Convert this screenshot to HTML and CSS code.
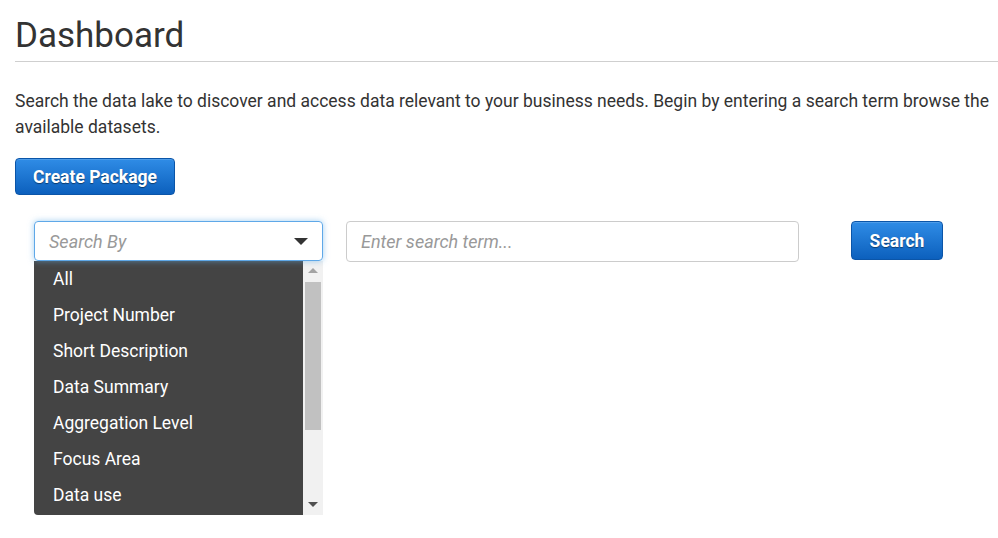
FILE: index.html
```html
<!DOCTYPE html>
<html>
<head>
<meta charset="utf-8">
<link rel="stylesheet" href="styles.css">
</head>
<body>
<div class="page">
  <header class="page-header">
    <h1>Dashboard</h1>
  </header>
  <p class="intro">Search the data lake to discover and access data relevant to your business needs. Begin by entering a search term browse the available datasets.</p>
  <button class="btn btn-primary btn-create">Create Package</button>
  <div class="search-row">
    <div class="select-wrap">
      <div class="select">
        <span class="placeholder">Search By</span>
        <span class="caret"></span>
      </div>
      <div class="dropdown">
        <ul class="options">
          <li>All</li>
          <li>Project Number</li>
          <li>Short Description</li>
          <li>Data Summary</li>
          <li>Aggregation Level</li>
          <li>Focus Area</li>
          <li>Data use</li>
        </ul>
        <div class="scrollbar">
          <span class="arrow-up"></span>
          <span class="thumb"></span>
          <span class="arrow-down"></span>
        </div>
      </div>
    </div>
    <div class="input"><span class="placeholder">Enter search term...</span></div>
    <button class="btn btn-primary btn-search">Search</button>
  </div>
</div>
</body>
</html>
```
FILE: styles.css
```css
* { box-sizing: border-box; }
html, body { margin: 0; padding: 0; background: #fff; }
body { font-family: Roboto, "Liberation Sans", sans-serif; color: #333; }
.page { padding: 0 0 0 15px; }
.page-header { padding: 16px 0 5px; border-bottom: 1px solid #cfcfcf; }
.page-header h1 { margin: 0; font-size: 35px; font-weight: 400; line-height: 40px; color: #333; }
.intro { margin: 26px 8px 0 0; font-size: 17.5px; line-height: 26px; color: #333; }
.btn {
  font-family: Roboto, "Liberation Sans", sans-serif;
  font-weight: 700; color: #fff; cursor: pointer;
  border-radius: 4px; border: 1px solid #0b55a8;
  text-shadow: 0 1px 1px rgba(0,0,0,0.45);
  background: linear-gradient(#2f8ce6, #0c60bd);
  box-shadow: inset 0 1px 0 rgba(255,255,255,0.15);
}
.btn-create { margin-top: 18px; width: 160px; height: 37px; font-size: 17.5px; padding: 0; display: block; }
.search-row { display: flex; align-items: flex-start; margin-top: 26px; padding-left: 19px; }
.select-wrap { width: 289px; display: flex; flex-direction: column; }
.select {
  height: 40px; border: 1px solid #5fa8e8; border-radius: 4px;
  box-shadow: 0 0 6px rgba(102,175,233,0.6);
  display: flex; align-items: center; justify-content: space-between;
  padding: 0 14px 0 14px;
  position: relative; z-index: 1;
}
.placeholder { font-size: 18px; font-style: italic; color: #999; }
.caret { width: 0; height: 0; border-left: 7px solid transparent; border-right: 7px solid transparent; border-top: 7px solid #333; }
.dropdown {
  width: 289px; height: 254px; flex: none;
  display: flex; background: #f1f1f1; border-bottom-left-radius: 4px;
}
.options { list-style: none; margin: 0; padding: 0; width: 269px; height: 254px; background: #444; border-bottom-left-radius: 4px; }
.options li { height: 36px; line-height: 36px; padding-left: 19px; color: #fff; font-size: 17.5px; }
.scrollbar { width: 20px; height: 254px; display: flex; flex-direction: column; align-items: center; }
.arrow-up { margin-top: 7px; width: 0; height: 0; border-left: 5px solid transparent; border-right: 5px solid transparent; border-bottom: 5px solid #a3a3a3; }
.thumb { margin-top: 9px; width: 16px; height: 148px; background: #c1c1c1; }
.arrow-down { margin-top: auto; margin-bottom: 8px; width: 0; height: 0; border-left: 5px solid transparent; border-right: 5px solid transparent; border-top: 5px solid #505050; }
.input {
  margin-left: 23px; width: 453px; height: 41px; border: 1px solid #ccc; border-radius: 4px;
  display: flex; align-items: center; padding-left: 14px;
}
.btn-search { margin-left: 52px; width: 92px; height: 39px; font-size: 17.5px; padding: 0; }
```
